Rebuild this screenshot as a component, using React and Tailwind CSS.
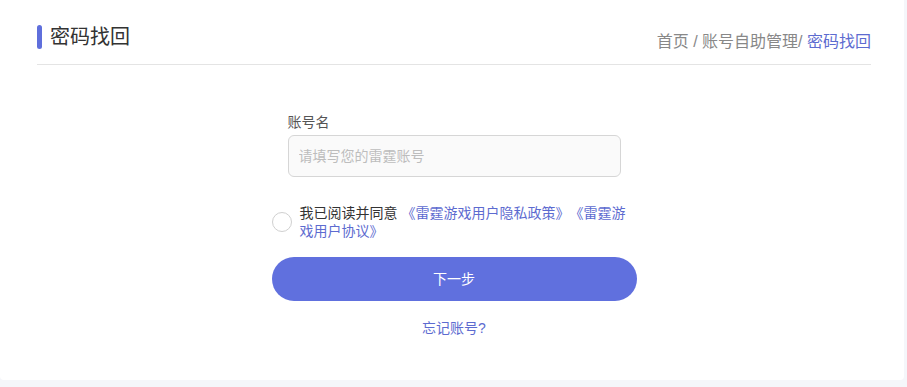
import { useState } from "react";

const font = {
  fontFamily: '"Liberation Sans", "Noto Sans CJK SC", sans-serif',
};

const Header = () => {
  return (
    <div className="flex items-start justify-between border-b border-[#e4e4e4] pt-[25px] pb-[11px]">
      <div className="flex items-center">
        <span className="mr-[8px] h-[24px] w-[5px] rounded-[3px] bg-[#5f6fdc]"></span>
        <h1 className="text-[20px] leading-[24px] text-[#333]">密码找回</h1>
      </div>
      <div className="mt-[6px] text-[16px] leading-[22px] text-[#888]">
        首页 / 账号自助管理/ <span className="text-[#5d6bd0]">密码找回</span>
      </div>
    </div>
  );
};

const RecoverForm = () => {
  const [account, setAccount] = useState("");
  const [agreed, setAgreed] = useState(false);

  return (
    <div className="mx-auto mt-[47px] w-[365px]">
      <div className="px-4">
        <label className="block text-[14px] leading-[20px] text-[#555]" htmlFor="account">
          账号名
        </label>
        <input
          id="account"
          type="text"
          value={account}
          onChange={(e) => setAccount(e.target.value)}
          placeholder="请填写您的雷霆账号"
          className="mt-[3px] h-[42px] w-full rounded-[6px] border border-[#d6d6d6] bg-[#fafafa] px-[10px] text-[14px] text-[#333] placeholder:text-[#bdbdbd] focus:outline-none"
        />
      </div>

      <div className="mt-[27px] flex items-center">
        <button
          type="button"
          onClick={() => setAgreed(!agreed)}
          className={
            agreed
              ? "h-[20px] w-[20px] shrink-0 rounded-full border border-[#5f6fdc] bg-[#5f6fdc]"
              : "h-[20px] w-[20px] shrink-0 rounded-full border border-[#d0d0d0] bg-white"
          }
        ></button>
        <p className="ml-[8px] w-[332px] text-[14px] leading-[18px] text-[#333] [text-spacing-trim:space-all]">
          我已阅读并同意 <span className="text-[#5d6bd0]">《雷霆游戏用户隐私政策》《雷霆游戏用户协议》</span>
        </p>
      </div>

      <button
        type="button"
        className="mt-[17px] h-[44px] w-full rounded-full bg-[#6070de] text-[14px] text-white"
      >
        下一步
      </button>

      <div className="mt-[17px] text-center text-[14px] leading-[20px] text-[#5d6bd0]">
        忘记账号?
      </div>
    </div>
  );
};

export default function App() {
  return (
    <div className="h-[387px] bg-[#f5f6fa] pr-[3px]" style={font}>
      <div className="h-[380px] rounded-b-[4px] bg-white pl-[37px] pr-[33px]">
        <Header />
        <RecoverForm />
      </div>
    </div>
  );
}
